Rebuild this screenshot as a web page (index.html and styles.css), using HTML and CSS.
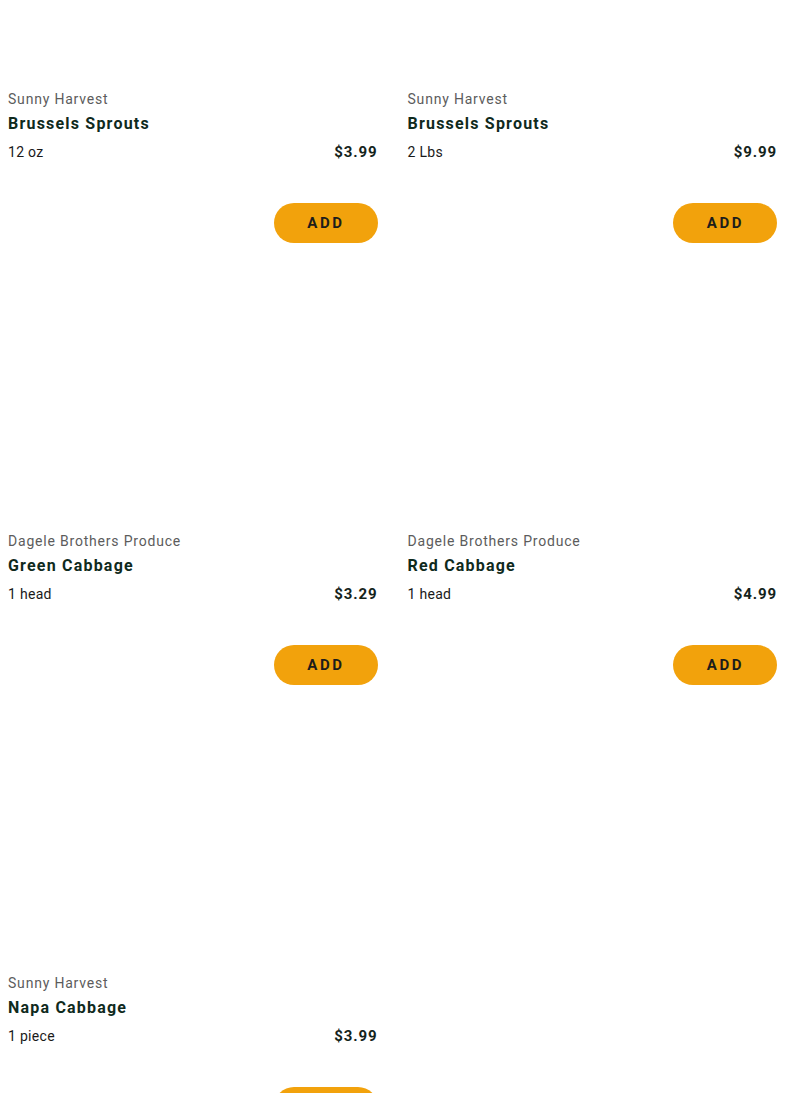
FILE: index.html
```html
<!DOCTYPE html>
<html lang="en">
<head>
  <meta charset="UTF-8">
  <meta name="viewport" content="width=device-width, initial-scale=1.0">
  <title>Cabbage &amp; Sprouts</title>
  <link rel="stylesheet" href="styles.css">
</head>
<body>
  <div class="product-grid">
    <div class="product-card">
      <div class="product-image"></div>
      <div class="product-info">
        <div class="brand">Sunny Harvest</div>
        <div class="name">Brussels Sprouts</div>
        <div class="meta">
          <span class="size">12 oz</span>
          <span class="price">$3.99</span>
        </div>
        <button class="add-button">ADD</button>
      </div>
    </div>

    <div class="product-card">
      <div class="product-image"></div>
      <div class="product-info">
        <div class="brand">Sunny Harvest</div>
        <div class="name">Brussels Sprouts</div>
        <div class="meta">
          <span class="size">2 Lbs</span>
          <span class="price">$9.99</span>
        </div>
        <button class="add-button">ADD</button>
      </div>
    </div>

    <div class="product-card">
      <div class="product-image"></div>
      <div class="product-info">
        <div class="brand">Dagele Brothers Produce</div>
        <div class="name">Green Cabbage</div>
        <div class="meta">
          <span class="size">1 head</span>
          <span class="price">$3.29</span>
        </div>
        <button class="add-button">ADD</button>
      </div>
    </div>

    <div class="product-card">
      <div class="product-image"></div>
      <div class="product-info">
        <div class="brand">Dagele Brothers Produce</div>
        <div class="name">Red Cabbage</div>
        <div class="meta">
          <span class="size">1 head</span>
          <span class="price">$4.99</span>
        </div>
        <button class="add-button">ADD</button>
      </div>
    </div>

    <div class="product-card">
      <div class="product-image"></div>
      <div class="product-info">
        <div class="brand">Sunny Harvest</div>
        <div class="name">Napa Cabbage</div>
        <div class="meta">
          <span class="size">1 piece</span>
          <span class="price">$3.99</span>
        </div>
        <button class="add-button">ADD</button>
      </div>
    </div>
  </div>
</body>
</html>
```

FILE: styles.css
```css
html {
  overflow: hidden;
}

body {
  font-family: Roboto, "Liberation Sans", Arial, sans-serif;
  margin: 0;
  padding: 0 8px;
  background-color: #fff;
  color: #1a1a1a;
}

/* page is shown scrolled a little way down */
.product-grid {
  display: grid;
  grid-template-columns: 1fr 1fr;
  column-gap: 30px;
  row-gap: 40px;
  margin-top: -159px;
}

.product-image {
  height: 248px;
}

.product-info {
  display: flex;
  flex-direction: column;
}

.brand {
  font-size: 14px;
  line-height: 20px;
  color: #5c5c5c;
  letter-spacing: 0.8px;
}

.name {
  margin-top: 3px;
  font-size: 16px;
  line-height: 24px;
  font-weight: 700;
  color: #0f2a1d;
  letter-spacing: 1.2px;
}

.meta {
  display: flex;
  justify-content: space-between;
  align-items: center;
  margin-top: 6px;
  line-height: 20px;
}

.size {
  font-size: 14px;
  color: #1a1a1a;
  letter-spacing: 0.3px;
}

.price {
  font-size: 15px;
  font-weight: 700;
  color: #14231b;
  letter-spacing: 0.9px;
}

.add-button {
  align-self: flex-end;
  margin-top: 41px;
  width: 104px;
  height: 40px;
  border: none;
  border-radius: 20px;
  background-color: #f2a20c;
  color: #1d1d1b;
  font-family: Roboto, "Liberation Sans", Arial, sans-serif;
  font-size: 15px;
  font-weight: 700;
  letter-spacing: 2.6px;
  padding: 0 0 0 1px;
  cursor: pointer;
}

.add-button:hover {
  background-color: #e0950a;
}
```
